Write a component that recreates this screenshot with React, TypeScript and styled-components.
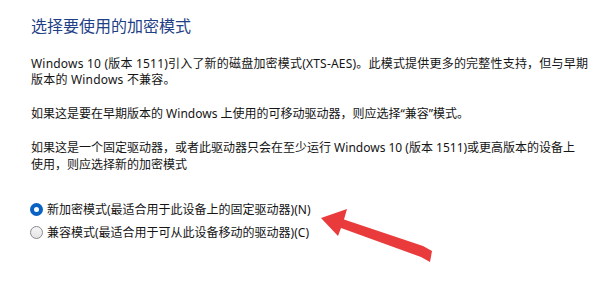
import React from "react";
import styled, { createGlobalStyle } from "styled-components";

const GlobalStyle = createGlobalStyle`
  html, body {
    margin: 0;
    padding: 0;
    background: #ffffff;
  }
`;

const Page = styled.div`
  position: relative;
  width: 595px;
  height: 286px;
  box-sizing: border-box;
  padding: 15px 0 0 31px;
  background: #ffffff;
  font-family: "Noto Sans", "Noto Sans CJK SC", sans-serif;
  color: #141414;
  overflow: hidden;
`;

const Title = styled.h1`
  margin: 0;
  font-size: 16px;
  line-height: 22px;
  font-weight: 400;
  color: #1f3f86;
  white-space: nowrap;
`;

const Body = styled.div`
  display: flex;
  flex-direction: column;
  gap: 17.5px;
  margin-top: 18.75px;
`;

const Paragraph = styled.p<{ $spread?: number }>`
  margin: 0;
  font-size: 12px;
  line-height: 16.5px;
  white-space: nowrap;
  letter-spacing: ${(p) => p.$spread ?? 0}px;
`;

const Options = styled.div`
  display: flex;
  flex-direction: column;
  gap: 3px;
  margin-top: 25.75px;
`;

const Option = styled.label`
  display: flex;
  align-items: center;
  gap: 4px;
  height: 20px;
  font-size: 12px;
  white-space: nowrap;
  cursor: default;
`;

const Dot = styled.span<{ $checked?: boolean }>`
  box-sizing: border-box;
  width: 13px;
  height: 13px;
  margin-left: -1px;
  border-radius: 50%;
  flex-shrink: 0;
  border: ${(p) => (p.$checked ? "4px solid #0a63c2" : "1px solid #8a8a8a")};
  background: ${(p) => (p.$checked ? "#ffffff" : "linear-gradient(#f6f6f6, #e4e4e4)")};
`;

const Arrow = styled.svg`
  position: absolute;
  left: 0;
  top: 0;
  pointer-events: none;
`;

export default function App() {
  return (
    <>
      <GlobalStyle />
      <Page>
        <Title>选择要使用的加密模式</Title>
        <Body>
          <Paragraph $spread={0.2}>
            Windows 10 (版本 1511)引入了新的磁盘加密模式(XTS-AES)。此模式提供更多的完整性支持，但与早期
            <br />
            版本的 Windows 不兼容。
          </Paragraph>
          <Paragraph>如果这是要在早期版本的 Windows 上使用的可移动驱动器，则应选择“兼容”模式。</Paragraph>
          <Paragraph>
            如果这是一个固定驱动器，或者此驱动器只会在至少运行 Windows 10 (版本 1511)或更高版本的设备上
            <br />
            使用，则应选择新的加密模式
          </Paragraph>
        </Body>
        <Options>
          <Option>
            <Dot $checked />
            新加密模式(最适合用于此设备上的固定驱动器)(N)
          </Option>
          <Option>
            <Dot />
            兼容模式(最适合用于可从此设备移动的驱动器)(C)
          </Option>
        </Options>
        <Arrow width="595" height="286" viewBox="0 0 595 286">
          <polygon
            points="321,218 347,209 344,219.5 423,246 432,251 430,262 421,257 341,228 338,236"
            fill="#e93b3b"
          />
        </Arrow>
      </Page>
    </>
  );
}
